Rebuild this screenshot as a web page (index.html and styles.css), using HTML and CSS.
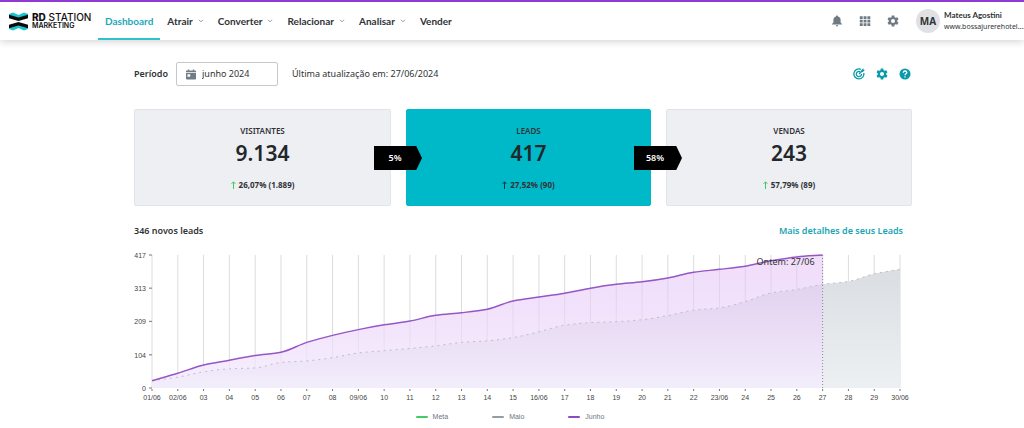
FILE: index.html
```html
<!DOCTYPE html>
<html lang="pt-BR">
<head>
<meta charset="utf-8">
<meta name="viewport" content="width=device-width, initial-scale=1">
<title>RD Station Marketing</title>
<link rel="stylesheet" href="styles.css">
</head>
<body>
<header class="topbar">
  <a class="brand" href="#" aria-label="RD Station Marketing">
    <svg class="brand-mark" viewBox="0 0 19 19" aria-hidden="true">
      <path fill="#1cc4cc" d="M0 2 4 .4 9.500 3 15 .4 19 2v2L9.500 6.500 0 4z"/>
      <path fill="#0b0b0b" d="M0 2.800 9.500 5.400 19 2.800v3.400L9.500 9 0 6.200z"/>
      <path fill="#1cc4cc" d="M0 17 4 18.600 9.500 16 15 18.600 19 17v-2L9.500 12.500 0 15z"/>
      <path fill="#0b0b0b" d="M0 16.200 9.500 13.600 19 16.200v-3.400L9.500 10 0 12.800z"/>
    </svg>
    <span class="brand-name"><span class="brand-top"><b>RD</b> STATION</span><span class="brand-sub">MARKETING</span></span>
  </a>
  <nav class="nav">
    <a class="nav-item active" href="#">Dashboard</a>
    <a class="nav-item" href="#">Atrair <svg class="chev" viewBox="0 0 6 4" aria-hidden="true"><path d="M1 .8 3 2.800 5 .8"/></svg></a>
    <a class="nav-item" href="#">Converter <svg class="chev" viewBox="0 0 6 4" aria-hidden="true"><path d="M1 .8 3 2.800 5 .8"/></svg></a>
    <a class="nav-item" href="#">Relacionar <svg class="chev" viewBox="0 0 6 4" aria-hidden="true"><path d="M1 .8 3 2.800 5 .8"/></svg></a>
    <a class="nav-item" href="#">Analisar <svg class="chev" viewBox="0 0 6 4" aria-hidden="true"><path d="M1 .8 3 2.800 5 .8"/></svg></a>
    <a class="nav-item" href="#">Vender</a>
  </nav>
  <div class="tools">
    <button class="icon-btn" type="button" aria-label="Notificações"><svg viewBox="0 0 12 12"><path d="M6 .5c.6 0 1 .4 1 1C8.800 2 9.600 3.300 9.600 5v2.600L11 9v.6H1V9l1.400-1.400V5C2.400 3.300 3.200 2 5 1.500c0-.6.4-1 1-1zM4.800 10.300h2.400a1.200 1.200 0 0 1-2.400 0z"/></svg></button>
    <button class="icon-btn" type="button" aria-label="Aplicativos"><svg viewBox="0 0 12 12"><path d="M.8 1.300h2.900v2.600H.8zM4.600 1.300h2.900v2.600H4.600zM8.400 1.300h2.900v2.600H8.400zM.8 4.800h2.900v2.600H.8zM4.600 4.800h2.900v2.600H4.600zM8.400 4.800h2.900v2.600H8.400zM.8 8.300h2.900v2.600H.8zM4.600 8.300h2.900v2.600H4.600zM8.400 8.300h2.900v2.600H8.400z"/></svg></button>
    <button class="icon-btn" type="button" aria-label="Configurações"><svg viewBox="0 0 24 24"><use href="#gear"/></svg></button>
  </div>
  <div class="user">
    <span class="avatar">MA</span>
    <span class="user-text"><b>Mateus Agostini</b><span>www.bossajurerehotel....</span></span>
  </div>
</header>

<main class="page">
  <div class="filters">
    <label class="filter-label" for="periodo">Período</label>
    <span class="date-field">
      <svg viewBox="0 0 11 11" aria-hidden="true"><path fill-rule="evenodd" d="M2 0h1.500v1.200h4V0H9v1.200h1.200q.8 0 .8.8v.8H0V2q0-.8.8-.8H2zM0 3.500h11V10q0 1-1 1H1q-1 0-1-1zm1.600 1.700v2.800h3V5.200z"/></svg>
      <input id="periodo" type="text" value="junho 2024" readonly>
    </span>
    <span class="updated">Última atualização em: 27/06/2024</span>
    <div class="actions">
      <button class="icon-btn" type="button" aria-label="Metas"><svg viewBox="0 0 12 12"><g fill="none" stroke="currentColor" stroke-width="1.300"><path d="M8 1.400A5 5 0 1 0 10.800 5"/><path d="M7.200 3.800A2.600 2.600 0 1 0 8.500 6M6 6l3-3"/></g><path d="m8.300 2.200 2-2 .3 1.500 1.300.3-2 2H8.300z"/></svg></button>
      <button class="icon-btn" type="button" aria-label="Ajustes"><svg viewBox="0 0 24 24"><use href="#gear"/></svg></button>
      <button class="icon-btn" type="button" aria-label="Ajuda"><svg viewBox="0 0 12 12"><circle cx="6" cy="6" r="5.500"/><path d="M4.200 4.700C4.300 2.400 7.800 2.500 7.800 4.600 7.800 5.800 6 5.800 6 7.200M6 8.200v1.300" fill="none" stroke="#fff" stroke-width="1.300"/></svg></button>
    </div>
  </div>

  <section class="funnel">
    <article class="card">
      <h2>VISITANTES</h2><p class="value">9.134</p>
      <p class="delta"><svg viewBox="0 0 5 8" aria-hidden="true"><path d="M2.500 8V1M.6 2.800l1.900-2 1.900 2"/></svg>26,07% (1.889)</p>
      <span class="rate">5%</span>
    </article>
    <article class="card selected">
      <h2>LEADS</h2><p class="value">417</p>
      <p class="delta"><svg viewBox="0 0 5 8" aria-hidden="true"><path d="M2.500 8V1M.6 2.800l1.900-2 1.900 2"/></svg>27,52% (90)</p>
      <span class="rate">58%</span>
    </article>
    <article class="card">
      <h2>VENDAS</h2><p class="value">243</p>
      <p class="delta"><svg viewBox="0 0 5 8" aria-hidden="true"><path d="M2.500 8V1M.6 2.800l1.900-2 1.900 2"/></svg>57,79% (89)</p>
    </article>
  </section>

  <section>
    <div class="chart-head"><h3>346 novos leads</h3><a href="#">Mais detalhes de seus Leads</a></div>
    <svg class="chart" id="chart" role="img" aria-label="Leads acumulados por dia"></svg>
    <ul class="legend">
      <li><i class="key meta"></i>Meta</li>
      <li><i class="key maio"></i>Maio</li>
      <li><i class="key junho"></i>Junho</li>
    </ul>
  </section>
</main>

<svg class="symbols" aria-hidden="true"><symbol id="gear" viewBox="0 0 24 24"><path fill-rule="evenodd" d="M9.500 1h5l.6 3.300 2.200 1.300 3.200-1.200 2.500 4.300L20.400 11v2l2.600 2.300-2.500 4.300-3.200-1.200-2.200 1.300-.6 3.300h-5l-.6-3.300-2.200-1.300-3.200 1.200L1 15.300 3.600 13v-2L1 8.700l2.500-4.300 3.200 1.200 2.200-1.300zM12 8a4 4 0 1 0 0 8 4 4 0 0 0 0-8z"/></symbol></svg>
<script src="chart.js"></script>
</body>
</html>
```
FILE: styles.css
```css
* { box-sizing: border-box; }
body { margin: 0; background: #fff; color: #2f3337; font: 10px/14px "Noto Sans", "Open Sans", sans-serif; }
h2, h3, p, ul { margin: 0; padding: 0; }
a { color: inherit; text-decoration: none; }
button { padding: 0; border: 0; background: none; color: inherit; font: inherit; cursor: pointer; }
.symbols { display: none; }

.topbar { display: flex; align-items: stretch; height: 40px; padding-left: 9px; border-top: 2px solid #8f3ad4; background: #fff; box-shadow: 0 1px 8px rgba(0, 0, 0, .2); }
.brand { display: flex; align-items: center; gap: 4px; color: #111; }
.brand-mark { width: 19px; height: 19px; }
.brand-name { display: flex; flex-direction: column; width: 66px; font-family: Inter, sans-serif; }
.brand-top { font-size: 10px; line-height: 10px; font-weight: 500; }
.brand-top b { font-weight: 800; }
.brand-sub { font-size: 7px; line-height: 8px; font-weight: 600; }
.nav { display: flex; flex: 1; }
.nav-item { display: flex; align-items: center; gap: 5px; padding: 2px 7px 0; font-family: Lato, sans-serif; font-weight: 700; border-bottom: 2px solid transparent; }
.nav-item.active { color: #1aa9b8; border-color: #2cc3cf; }
.chev { width: 6px; height: 4px; fill: none; stroke: #8d979f; }
.tools { display: flex; align-items: center; gap: 16px; color: #6f7a83; }
.icon-btn { display: flex; }
.icon-btn svg { width: 12px; height: 12px; fill: currentColor; }
.user { display: flex; align-items: center; gap: 4px; margin-left: 17px; padding-right: 3px; }
.avatar { width: 24px; height: 24px; border-radius: 50%; background: #dfe1e5; font: 700 10px/24px "Noto Sans", sans-serif; text-align: center; }
.user-text { display: flex; flex-direction: column; width: 77px; font: 8px/11px Lato, sans-serif; white-space: nowrap; }
.user-text span { font: 7px/11px "Noto Sans", sans-serif; }

.page { padding: 22px 112px 0 134px; }
.filters { display: flex; align-items: center; font-size: 9px; }
.filter-label { font-weight: 600; }
.date-field { display: flex; align-items: center; gap: 6px; width: 102px; height: 24px; margin: 0 14px 0 8px; padding-left: 9px; border: 1px solid #c3c9cf; border-radius: 2px; }
.date-field svg { width: 10px; height: 11px; flex: none; fill: #717c86; }
.date-field input { width: 100%; min-width: 0; padding: 0; border: 0; outline: 0; background: none; color: inherit; font: inherit; }
.actions { display: flex; gap: 11px; margin-left: auto; padding-right: 1px; color: #0a9aaa; }

.funnel { display: grid; grid-template-columns: 257fr 245fr 246fr; gap: 15px; margin-top: 23px; }
.card { position: relative; height: 97px; padding-top: 14px; border: 1px solid #e1e4e9; border-radius: 2px; background: #eeeff2; text-align: center; }
.card.selected { background: #00b9c8; border-color: #00b9c8; }
.card h2 { font-size: 8px; line-height: 14px; font-weight: 600; }
.value { color: #23272b; font: 600 21px/30px "Noto Sans", sans-serif; }
.delta { display: flex; justify-content: center; align-items: center; gap: 3px; margin-top: 10px; font-size: 8px; font-weight: 700; }
.delta svg { width: 5px; height: 8px; fill: none; stroke: #3cc961; }
.selected .delta svg { stroke: #172f36; }
.rate { position: absolute; z-index: 1; right: -32px; top: 36px; width: 48px; height: 24px; padding-right: 6px; background: #000; color: #fff; font: 600 9px/24px "Noto Sans", sans-serif; clip-path: polygon(0 0, 88% 0, 100% 50%, 88% 100%, 0 100%); }

.chart-head { display: flex; justify-content: space-between; margin-top: 18px; padding-right: 9px; font-size: 9px; }
.chart-head h3 { font-size: 9px; font-weight: 600; }
.chart-head a { color: #1aa5b4; font-weight: 600; }
.chart { display: block; width: 100%; height: 166px; margin-top: 8px; overflow: visible; }
.chart text { fill: #444; font: 7px "Liberation Sans", Arial, sans-serif; text-anchor: middle; }
.chart .y-label { text-anchor: end; }
.chart .note { fill: #333; font: 9px "Noto Sans", sans-serif; text-anchor: end; }
.grid { stroke: #dcdcde; }
.tick { stroke: #777; }
.line-junho { fill: none; stroke: #9656c6; stroke-width: 1.500; }
.line-maio { fill: none; stroke: #bdbdc8; stroke-dasharray: 2 4; }
.marker { stroke: #8d8798; stroke-dasharray: 1 2; }
.legend { display: flex; justify-content: center; gap: 44px; padding-right: 26px; list-style: none; color: #6b7680; font: 7px/10px "Liberation Sans", Arial, sans-serif; }
.legend li { display: flex; align-items: center; gap: 5px; }
.key { width: 12px; height: 2px; border-radius: 1px; }
.meta { background: #43cc63; }
.maio { background: #929da6; }
.junho { background: #8b4bc2; }
```
FILE: chart.js
```js
const junho = [23, 46, 72, 87, 102, 112, 143, 165, 183, 198, 210, 228, 236, 247, 273, 285, 297, 313, 325, 333, 345, 363, 372, 382, 399, 411, 417];
const maio = [23, 34, 51, 60, 63, 80, 85, 95, 110, 117, 124, 132, 143, 148, 158, 176, 197, 205, 208, 214, 227, 244, 251, 271, 298, 309, 325, 334, 358, 372];
const fullDates = [1, 2, 9, 16, 23, 30];
const svg = document.getElementById('chart');

function smooth(points) {
  const slope = points.slice(1).map((p, i) => (p[1] - points[i][1]) / (p[0] - points[i][0]));
  const tangent = points.map((_, i) => {
    const a = slope[i - 1], b = slope[i];
    if (a === undefined) return b;
    if (b === undefined) return a;
    return a * b <= 0 ? 0 : 2 * a * b / (a + b);
  });
  let d = 'M' + points[0];
  for (let i = 1; i < points.length; i++) {
    const [x0, y0] = points[i - 1], [x1, y1] = points[i], h = (x1 - x0) / 3;
    d += `C${x0 + h},${y0 + tangent[i - 1] * h} ${x1 - h},${y1 - tangent[i] * h} ${x1},${y1}`;
  }
  return d;
}

function draw() {
  const left = 18, right = svg.clientWidth - 12, top = 9, bottom = 142;
  const x = day => left + (day - 1) * (right - left) / 29;
  const y = value => bottom - value / 417 * (bottom - top);
  const line = data => smooth(data.map((v, i) => [x(i + 1), y(v)]));
  const area = data => `${line(data)}V${bottom}H${left}Z`;
  let grid = '', labels = '';
  for (let day = 1; day <= 30; day++) {
    const name = String(day).padStart(2, '0') + (fullDates.includes(day) ? '/06' : '');
    grid += `<path class="grid" d="M${x(day)} ${top}V${bottom}"/>`;
    labels += `<path class="tick" d="M${x(day)} ${bottom + 1}v2"/><text x="${x(day)}" y="${bottom + 12}">${name}</text>`;
  }
  for (const v of [0, 104, 209, 313, 417]) {
    labels += `<path class="tick" d="M${left - 3} ${y(v)}h3"/><text class="y-label" x="${left - 6}" y="${y(v) + 3}">${v}</text>`;
  }
  svg.innerHTML = `<defs>
    <linearGradient id="fillJunho" x2="0" y2="1"><stop stop-color="#e2bdf5" stop-opacity=".5"/><stop offset="1" stop-color="#f4edfd" stop-opacity=".8"/></linearGradient>
    <linearGradient id="fillMaio" x2="0" y2="1"><stop stop-color="#dadee2"/><stop offset="1" stop-color="#edf0f3"/></linearGradient></defs>
    ${grid}<path fill="url(#fillMaio)" d="${area(maio)}"/><path fill="url(#fillJunho)" d="${area(junho)}"/>
    <path class="line-maio" d="${line(maio)}"/><path class="line-junho" d="${line(junho)}"/>
    <path class="marker" d="M${x(27)} ${top}V${bottom}"/>${labels}
    <text class="note" x="${x(27) - 8}" y="19">Ontem: 27/06</text>`;
}
draw();
addEventListener('resize', draw);
```
